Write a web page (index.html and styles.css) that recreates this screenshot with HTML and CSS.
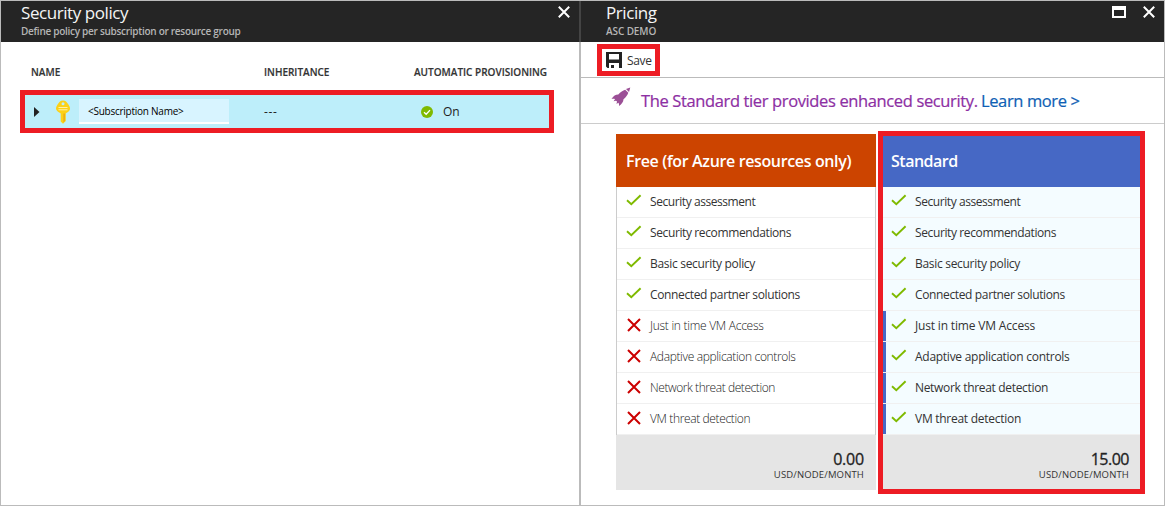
FILE: index.html
```html
<!DOCTYPE html>
<html lang="en">
<head>
<meta charset="utf-8">
<title>Security policy</title>
<link rel="stylesheet" href="styles.css">
</head>
<body>
<svg class="defs" aria-hidden="true">
  <symbol id="check" viewBox="0 0 16 12"><path d="M1 6.2 5.3 10.2 14.6 1.2" fill="none" stroke="#7fba00" stroke-width="1.9"/></symbol>
  <symbol id="cross" viewBox="0 0 14 14"><path d="M1 1 13 13M13 1 1 13" fill="none" stroke="#cc0000" stroke-width="2"/></symbol>
  <symbol id="close" viewBox="0 0 12 12"><path d="M.8.8 11.2 11.2M11.2.8.8 11.2" fill="none" stroke="#fff" stroke-width="2"/></symbol>
</svg>
<div class="portal">
  <section class="blade blade-policy">
    <header class="blade-header">
      <div class="titles"><h1>Security policy</h1><p class="subtitle">Define policy per subscription or resource group</p></div>
      <svg class="ctl"><use href="#close"/></svg>
    </header>
    <div class="grid-head">
      <span>NAME</span><span>INHERITANCE</span><span>AUTOMATIC PROVISIONING</span>
    </div>
    <div class="grid-row">
      <svg class="arrow" viewBox="0 0 6 10"><path d="M0 0 5.5 5 0 10Z" fill="#222"/></svg>
      <svg class="key" viewBox="0 0 16 24"><path d="M8 .5c2.8 0 4.2 2 5.6 4.300 1.600 2.600 1.900 4.200.8 5.800-1 1.500-2.500 2.200-3.600 2.800V21L8 23.800 5.700 21.500V13.400C4.500 12.800 3 12 1.800 10.600.5 9 .8 7.400 2.400 4.800 3.800 2.500 5.200.5 8 .5Z" fill="#fcd116"/><path d="M8.400 13.500h1.500V21L8.400 22.500Z" fill="#e8ab14"/><circle cx="8" cy="3.800" r="1.500" fill="#bdeefa"/><path d="M3.500 7.500h9M3.500 9.800h9" stroke="#fff2a8" stroke-width="1"/></svg>
      <span class="sub-box">&lt;Subscription Name&gt;</span>
      <span class="inherit">---</span>
      <svg class="ok" viewBox="0 0 12 12"><circle cx="6" cy="6" r="6" fill="#7fba00"/><path d="M3 6.200 5.200 8.300 9 4.100" fill="none" stroke="#fff" stroke-width="1.300"/></svg>
      <span>On</span>
    </div>
  </section>
  <section class="blade blade-pricing">
    <header class="blade-header">
      <div class="titles"><h1>Pricing</h1><p>ASC DEMO</p></div>
      <svg class="max" viewBox="0 0 14 12"><path d="M0 0H14V12H0ZM2 4V10H12V4Z" fill="#fff" fill-rule="evenodd"/></svg>
      <svg class="ctl"><use href="#close"/></svg>
    </header>
    <div class="toolbar">
      <button class="save"><svg viewBox="0 0 16 16"><path d="M0 0H16V16H13V11H3V16H1.500L0 14.500ZM3 2V7.500H13V2Z" fill="#222" fill-rule="evenodd"/><path d="M5 13H8V16H5Z" fill="#222"/></svg><span>Save</span></button>
    </div>
    <div class="banner">
      <svg class="rocket" viewBox="0 0 20 20"><path d="M19.300.5 18 5 15 2Z" fill="#9b4f96"/><path d="M14.200 2.700 17.300 5.700C16.500 8 15 10 12.500 12.300 12.300 15 11 17 8 19 8.200 17.300 8 16.500 7.300 15.700L5.500 17 6 14.600 5 13.700 2.600 14.200 4 12.200C3.300 11.500 2.300 11.600.5 12 2.500 8.800 4.500 7.700 7.300 7.500 9.500 5 11.900 3.400 14.200 2.700Z" fill="#9b4f96"/></svg>
      <span class="promo">The Standard tier provides enhanced security.</span><a class="learn">Learn more &gt;</a>
    </div>
    <div class="tiers">
      <article class="tier free">
        <h2>Free (for Azure resources only)</h2>
        <ul>
          <li><svg class="ck"><use href="#check"/></svg><span class="assess">Security assessment</span></li>
          <li><svg class="ck"><use href="#check"/></svg><span class="recommend">Security recommendations</span></li>
          <li><svg class="ck"><use href="#check"/></svg><span class="basic">Basic security policy</span></li>
          <li><svg class="ck"><use href="#check"/></svg><span class="partner">Connected partner solutions</span></li>
          <li class="off"><svg class="cx"><use href="#cross"/></svg><span class="jit">Just in time VM Access</span></li>
          <li class="off"><svg class="cx"><use href="#cross"/></svg><span class="adaptive">Adaptive application controls</span></li>
          <li class="off"><svg class="cx"><use href="#cross"/></svg><span class="network">Network threat detection</span></li>
          <li class="off"><svg class="cx"><use href="#cross"/></svg><span class="vm">VM threat detection</span></li>
        </ul>
        <footer><b>0.00</b><small>USD/NODE/MONTH</small></footer>
      </article>
      <article class="tier standard">
        <h2>Standard</h2>
        <ul>
          <li><svg class="ck"><use href="#check"/></svg><span class="assess">Security assessment</span></li>
          <li><svg class="ck"><use href="#check"/></svg><span class="recommend">Security recommendations</span></li>
          <li><svg class="ck"><use href="#check"/></svg><span class="basic">Basic security policy</span></li>
          <li><svg class="ck"><use href="#check"/></svg><span class="partner">Connected partner solutions</span></li>
          <li class="extra"><svg class="ck"><use href="#check"/></svg><span class="jit">Just in time VM Access</span></li>
          <li class="extra"><svg class="ck"><use href="#check"/></svg><span class="adaptive">Adaptive application controls</span></li>
          <li class="extra"><svg class="ck"><use href="#check"/></svg><span class="network">Network threat detection</span></li>
          <li class="extra"><svg class="ck"><use href="#check"/></svg><span class="vm">VM threat detection</span></li>
        </ul>
        <footer><b>15.00</b><small>USD/NODE/MONTH</small></footer>
      </article>
    </div>
  </section>
</div>
</body>
</html>
```

FILE: styles.css
```css
* { box-sizing: border-box; }
body { margin: 0; font-family: "Open Sans", "Noto Sans", sans-serif; color: #222; background: #fff; }
h1, h2, p, ul { margin: 0; padding: 0; font-weight: 400; white-space: nowrap; }
span, a { white-space: nowrap; }
svg { flex: none; display: block; }
.defs { position: absolute; width: 0; height: 0; }
.portal { display: flex; width: 1165px; height: 506px; border: 1px solid #bbb; }
.blade-policy { width: 580px; border-right: 2px solid #bbb; }
.blade-pricing { flex: 1; }

.blade-header { display: flex; height: 41px; background: #252525; }
.blade-policy .blade-header { width: 580px; border-right: 2px solid #444; padding: 5px 9px 0 20px; }
.blade-pricing .blade-header { padding: 5px 9px 0 25px; }
.titles { flex: 1; }
.titles h1 { font-size: 17px; line-height: 14px; color: #f5f5f5; letter-spacing: -.43px; }
.titles p { font-size: 10px; line-height: 14px; margin-top: 4px; color: #b5b5b5; font-weight: 600; letter-spacing: -.1px; }
.titles .subtitle { letter-spacing: -.28px; }
.ctl { width: 12px; height: 12px; }
.max { width: 14px; height: 12px; margin-right: 17px; }

.grid-head { display: grid; grid-template-columns: 233px 150px 1fr; padding: 23px 0 0 30px; height: 48px; font-size: 10px; line-height: 15px; font-weight: 600; color: #333; -webkit-text-stroke: .15px; }
.grid-row { display: flex; align-items: center; width: 534px; height: 43px; margin-left: 19px; border: 5px solid #ed1c24; background: #bdeefa; font-size: 12px; }
.arrow { width: 6px; height: 10px; margin-left: 9px; }
.key { width: 16px; height: 24px; margin: 0 8px 0 15px; }
.sub-box { width: 150px; height: 25px; background: #d8f4ff; border-bottom: 2px solid #fff; padding-left: 9px; font-size: 10px; line-height: 24px; color: #000; letter-spacing: -.25px; }
.inherit { width: 192px; padding-left: 35px; letter-spacing: .6px; }
.ok { width: 12px; height: 12px; margin-right: 10px; }

.toolbar { height: 36px; border-bottom: 1px solid #bbb; padding: 2px 0 0 16px; }
.save { display: flex; align-items: center; width: 63px; height: 32px; padding: 0 0 0 4px; border: 5px solid #ed1c24; background: #fff; font: 12px "Open Sans", sans-serif; color: #333; gap: 5px; letter-spacing: -.35px; }
.save svg { width: 16px; height: 16px; }
.banner { display: flex; height: 46px; border-bottom: 1px solid #ccc; padding: 0 0 0 30px; font-size: 16.5px; line-height: 45px; }
.rocket { width: 20px; height: 20px; margin: 9px 10px 0 0; }
.promo { color: #8d2fa3; -webkit-text-stroke: .2px; width: 340px; letter-spacing: -.37px; }
.learn { color: #0f5fb4; -webkit-text-stroke: .2px; letter-spacing: -.38px; }

.tiers { display: flex; padding: 7px 0 0 35px; }
.tier { width: 260px; margin-top: 3px; }
.tier h2 { height: 53px; line-height: 54px; padding-left: 10px; color: #fff; font-size: 16px; font-weight: 600; letter-spacing: -.36px; }
.tier ul { list-style: none; }
.tier li { display: flex; height: 31px; border-bottom: 1px solid #f0f0f0; font-size: 12px; line-height: 30px; color: #333; padding-left: 9px; }
.ck { width: 16px; height: 12px; margin: 7px 8px 0 0; }
.cx { width: 14px; height: 14px; margin: 7px 9px 0 1px; }
.assess { letter-spacing: -.43px; }
.recommend { letter-spacing: -.38px; }
.basic { letter-spacing: -.3px; }
.partner { letter-spacing: -.36px; }
.jit { letter-spacing: -.17px; }
.adaptive { letter-spacing: -.27px; }
.network { letter-spacing: -.33px; }
.vm { letter-spacing: -.27px; }
.tier .off { font-weight: 300; color: #222; }
.off .jit { letter-spacing: -.27px; }
.off .adaptive { letter-spacing: -.35px; }
.off .network { letter-spacing: -.43px; }
.off .vm { letter-spacing: -.37px; }
.free h2 { background: #cc4400; }
.free ul { border: 1px solid #ccc; border-width: 0 1px; }
.tier footer { height: 55px; background: #e5e5e5; padding: 15px 12px 0 0; text-align: right; }
.tier b { display: block; font-size: 16px; line-height: 18px; font-weight: 400; -webkit-text-stroke: .3px; letter-spacing: -.2px; }
.tier small { display: block; font-size: 9.5px; line-height: 13px; color: #333; letter-spacing: .15px; }
.standard { width: 267px; height: 363px; margin: 0 0 0 2px; border: 5px solid #ed1c24; }
.standard h2 { height: 51px; line-height: 50px; padding-left: 8px; background: #4668c5; letter-spacing: -.5px; }
.standard ul { background: #f4fcff; }
.standard li { padding-left: 8px; position: relative; }
.standard .extra::before { content: ""; position: absolute; left: 0; top: 0; width: 3px; height: 30px; background: #4668c5; }
.standard footer { height: 54px; padding-right: 11px; }
.standard b { letter-spacing: -.5px; }
```
